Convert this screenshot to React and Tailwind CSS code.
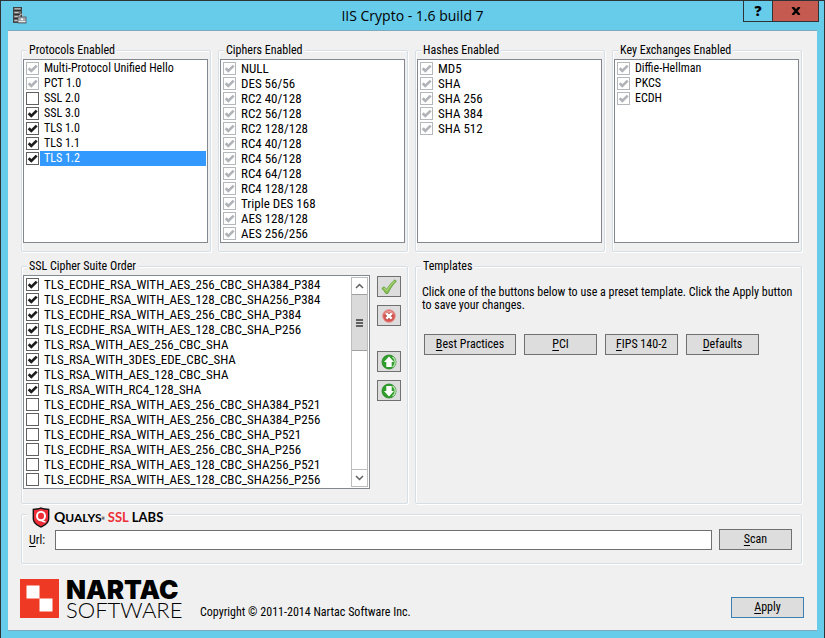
import React from "react";

const protocols = [
  { name: "Multi-Protocol Unified Hello", state: "locked" },
  { name: "PCT 1.0", state: "locked" },
  { name: "SSL 2.0", state: "off" },
  { name: "SSL 3.0", state: "on" },
  { name: "TLS 1.0", state: "on" },
  { name: "TLS 1.1", state: "on" },
  { name: "TLS 1.2", state: "on", selected: true },
];

const locked = (names) => names.map((name) => ({ name, state: "locked" }));

const ciphers = locked([
  "NULL",
  "DES 56/56",
  "RC2 40/128",
  "RC2 56/128",
  "RC2 128/128",
  "RC4 40/128",
  "RC4 56/128",
  "RC4 64/128",
  "RC4 128/128",
  "Triple DES 168",
  "AES 128/128",
  "AES 256/256",
]);
const hashes = locked(["MD5", "SHA", "SHA 256", "SHA 384", "SHA 512"]);
const exchanges = locked(["Diffie-Hellman", "PKCS", "ECDH"]);

const suites = [
  ["TLS_ECDHE_RSA_WITH_AES_256_CBC_SHA384_P384", "on"],
  ["TLS_ECDHE_RSA_WITH_AES_128_CBC_SHA256_P384", "on"],
  ["TLS_ECDHE_RSA_WITH_AES_256_CBC_SHA_P384", "on"],
  ["TLS_ECDHE_RSA_WITH_AES_128_CBC_SHA_P256", "on"],
  ["TLS_RSA_WITH_AES_256_CBC_SHA", "on"],
  ["TLS_RSA_WITH_3DES_EDE_CBC_SHA", "on"],
  ["TLS_RSA_WITH_AES_128_CBC_SHA", "on"],
  ["TLS_RSA_WITH_RC4_128_SHA", "on"],
  ["TLS_ECDHE_RSA_WITH_AES_256_CBC_SHA384_P521", "off"],
  ["TLS_ECDHE_RSA_WITH_AES_256_CBC_SHA384_P256", "off"],
  ["TLS_ECDHE_RSA_WITH_AES_256_CBC_SHA_P521", "off"],
  ["TLS_ECDHE_RSA_WITH_AES_256_CBC_SHA_P256", "off"],
  ["TLS_ECDHE_RSA_WITH_AES_128_CBC_SHA256_P521", "off"],
  ["TLS_ECDHE_RSA_WITH_AES_128_CBC_SHA256_P256", "off"],
].map(([name, state]) => ({ name, state }));

function CheckRow({ item }) {
  const isLocked = item.state === "locked";
  return (
    <li>
      <label className="flex h-[15px] items-center gap-px pl-px">
        <span className="grid size-[13px] shrink-0">
          <input
            type="checkbox"
            defaultChecked={item.state !== "off"}
            disabled={isLocked}
            className="peer col-start-1 row-start-1 size-[13px] appearance-none border border-[#606060] bg-white disabled:border-[#b4b8bc]"
          />
          <svg
            viewBox="0 0 13 13"
            aria-hidden="true"
            className="pointer-events-none invisible col-start-1 row-start-1 size-[13px] text-[#1c1c1c] peer-checked:visible peer-disabled:text-[#b0b4b8]"
          >
            <path d="M2.700 6.200L5.300 8.900L10.700 3.600" fill="none" stroke="currentColor" strokeWidth="2.700" />
          </svg>
        </span>
        <span
          className={
            item.selected
              ? "h-[15px] flex-1 bg-[#3399ff] pl-1 leading-[15px] whitespace-nowrap text-white"
              : "h-[15px] flex-1 pl-1 leading-[15px] whitespace-nowrap"
          }
        >
          {item.name}
        </span>
      </label>
    </li>
  );
}

function Group({ title, className, children }) {
  return (
    <fieldset className="flex min-w-0 flex-col rounded-[2px] border border-[#d5dfe5] shadow-[1px_1px_0_#fff,inset_1px_1px_0_#fff]">
      <legend className="ml-[5px] bg-[#f0f0f0] px-[2px] leading-[13px]">{title}</legend>
      <div className={"flex-1 " + className}>{children}</div>
    </fieldset>
  );
}

function ListGroup({ title, items, textSize = "text-[12px]" }) {
  return (
    <Group title={title} className="flex flex-col pt-[2px] pr-[2px] pb-2 pl-px">
      <ul className={"flex-1 border border-[#828790] bg-white p-px " + textSize}>
        {items.map((item) => (
          <CheckRow key={item.name} item={item} />
        ))}
      </ul>
    </Group>
  );
}

function PushButton({ hot, rest, accent, wide }) {
  return (
    <button
      type="button"
      className={
        "h-[21px] shrink-0 border bg-[#dddddd] text-center leading-[19px] " +
        (wide ? "w-[92px] " : "w-[73px] ") +
        (accent ? "border-[#3c7fb1]" : "border-[#707070]")
      }
    >
      <span className="underline underline-offset-2">{hot}</span>
      {rest}
    </button>
  );
}

function ToolButton({ label, children }) {
  return (
    <button
      type="button"
      aria-label={label}
      className="flex h-[21px] w-6 items-center justify-center border border-[#707070] bg-[#dddddd]"
    >
      <svg viewBox="0 0 16 16" className="size-4">
        {children}
      </svg>
    </button>
  );
}

function ScrollBar() {
  return (
    <div className="flex w-[17px] shrink-0 flex-col border-x border-[#bcbcbc] bg-white">
      <button
        type="button"
        aria-label="Scroll up"
        className="flex h-[17px] items-center justify-center border-t border-[#bcbcbc]"
      >
        <svg viewBox="0 0 9 6" className="h-[6px] w-[9px]">
          <path d="M1 5L4.5 1.5L8 5" fill="none" stroke="#606060" strokeWidth="1.5" />
        </svg>
      </button>
      <div className="flex h-[57px] flex-col items-center justify-center gap-px border-y border-[#a0a0a0] bg-[#dadada]">
        <span className="h-[2px] w-[7px] bg-[#606060]" />
        <span className="h-[2px] w-[7px] bg-[#606060]" />
        <span className="h-[2px] w-[7px] bg-[#606060]" />
      </div>
      <div className="flex-1" />
      <button
        type="button"
        aria-label="Scroll down"
        className="flex h-[18px] items-center justify-center border-y border-[#bcbcbc]"
      >
        <svg viewBox="0 0 9 6" className="h-[6px] w-[9px]">
          <path d="M1 1L4.5 4.5L8 1" fill="none" stroke="#606060" strokeWidth="1.5" />
        </svg>
      </button>
    </div>
  );
}

function ServerIcon() {
  return (
    <svg viewBox="0 0 14 17" className="h-[17px] w-[14px]" aria-hidden="true">
      <rect x="0.5" y="0.5" width="8" height="15" fill="#6b6b6b" stroke="#3f4346" />
      <path d="M1 3.5h7M1 7.5h7M1 11.5h7" stroke="#2c2c2c" />
      <path d="M1.5 1.8h6M1.5 5.5h4M1.5 9.5h4M1.5 13.5h4" stroke="#c4c4c4" />
      <path d="M6.500 10V9.200a2 2 0 0 1 4 0V10" fill="none" stroke="#b5bcc2" />
      <rect x="5" y="10" width="8" height="6" fill="#a4aab0" stroke="#50565a" strokeWidth="0.8" />
      <path d="M5.500 14.500h7" stroke="#e6e8ea" />
      <rect x="8" y="11.500" width="2" height="1.500" fill="#fff" />
    </svg>
  );
}

function QualysLogo() {
  return (
    <span className="flex h-[21px] items-start pt-[3px] pl-[3px]">
      <svg viewBox="0 0 18 21" className="h-[21px] w-[18px] shrink-0" aria-hidden="true">
        <path
          d="M9 0.3C11.5 1.3 14.5 1.7 17.4 1.7V11.5C17.4 16 13.5 18.8 9 20.7C4.500 18.8 0.600 16 0.600 11.500V1.7C3.5 1.7 6.500 1.300 9 0.300Z"
          fill="#1a1416"
        />
        <path
          d="M9 1.700C11.300 2.500 13.700 2.900 16 3V11.500C16 15 13 17.400 9 19.200C5 17.400 2 15 2 11.500V3C4.300 2.900 6.700 2.500 9 1.700Z"
          fill="#ed2e38"
        />
        <ellipse cx="9" cy="9" rx="4" ry="4.300" fill="none" stroke="#fff" strokeWidth="2" />
        <path d="M8.500 13.200C10 13.200 11 15.200 13.500 14.800" fill="none" stroke="#fff" strokeWidth="1.500" />
      </svg>
      <span className="flex items-baseline gap-[3px] pl-1 font-['Lato',sans-serif] text-[13px] leading-[19px] font-bold text-black">
        <span className="text-[14px]">
          Q<span className="text-[12px]">UALYS</span>
          <sup className="text-[4px]">®</sup>
        </span>
        <span className="text-[#ed2e38]">SSL</span>
        <span>LABS</span>
      </span>
    </span>
  );
}

export default function App() {
  return (
    <div className="flex min-h-screen flex-col border border-[#2f3336] bg-[#67cbea] font-['Roboto_Condensed','Liberation_Sans',sans-serif] text-[12px] text-black">
      <header className="grid h-[29px] grid-cols-[1fr_auto_1fr] items-center">
        <span className="pl-3">
          <ServerIcon />
        </span>
        <h1 className="font-['Open_Sans',sans-serif] text-[14px] leading-[29px]">IIS Crypto - 1.6 build 7</h1>
        <div className="flex justify-end self-start pr-[5px]">
          <button
            type="button"
            aria-label="Help"
            className="flex h-[21px] w-[29px] items-center justify-center border-b border-l border-[#2f3336]"
          >
            <span className="font-['Open_Sans',sans-serif] text-[14px] leading-[20px] font-extrabold">?</span>
          </button>
          <button
            type="button"
            aria-label="Close"
            className="flex h-[21px] w-[47px] items-center justify-center border-x border-b border-[#2f3336] bg-[#c45a50]"
          >
            <svg viewBox="0 0 10 8" className="h-2 w-[10px]">
              <path d="M1.500 0L8.500 8M8.500 0L1.500 8" stroke="#000" strokeWidth="2.400" />
            </svg>
          </button>
        </div>
      </header>

      <main className="mx-[7px] mb-[7px] flex-1 border-y border-[#7fa9bf] bg-[#f0f0f0] pt-[13px]">
        <div className="pr-[15px] pl-[13px]">
          <div className="grid grid-cols-4 gap-[7px]">
            <ListGroup title="Protocols Enabled" items={protocols} />
            <ListGroup title="Ciphers Enabled" items={ciphers} textSize="text-[13px]" />
            <ListGroup title="Hashes Enabled" items={hashes} textSize="text-[13px]" />
            <ListGroup title="Key Exchanges Enabled" items={exchanges} />
          </div>

          <div className="mt-2 grid grid-cols-2 gap-[7px]">
            <Group title="SSL Cipher Suite Order" className="flex gap-[7px] pt-[2px] pr-[6px] pb-[14px] pl-px">
              <div className="flex min-w-0 flex-1 border border-[#828790] bg-white p-px">
                <ul className="min-w-0 flex-1 overflow-hidden text-[13px]">
                  {suites.map((item) => (
                    <CheckRow key={item.name} item={item} />
                  ))}
                </ul>
                <ScrollBar />
              </div>
              <div className="flex flex-col gap-[25px] pt-px">
                <div className="flex flex-col gap-2">
                  <ToolButton label="Check all">
                    <path
                      d="M0.800 9.500L3 7.800L5.800 10.300C8 6.500 10.500 3.500 14 0.800L15.300 2.200C11.500 6 9 9.800 6.800 14.500H4.800C3.800 12.500 2.500 10.800 0.800 9.500Z"
                      fill="#8cc152"
                      stroke="#5c9a38"
                      strokeWidth="0.800"
                    />
                    <path d="M3 9L5.800 11.600C8.200 7.500 10.500 4.800 13.500 2.200" fill="none" stroke="#b9dd8c" strokeWidth="0.900" />
                  </ToolButton>
                  <ToolButton label="Uncheck all">
                    <circle cx="8" cy="8" r="6.300" fill="#d9534f" stroke="#e59a98" strokeWidth="1" />
                    <path d="M3 6.500A5.200 5.200 0 0 1 13 6.500C10 5 6 5 3 6.500Z" fill="#ec9a97" />
                    <path d="M5.300 5.300L10.700 10.700M10.700 5.300L5.300 10.700" stroke="#a94442" strokeWidth="3.800" />
                    <path d="M5.300 5.300L10.700 10.700M10.700 5.300L5.300 10.700" stroke="#fff" strokeWidth="2.600" />
                  </ToolButton>
                </div>
                <div className="flex flex-col gap-2">
                  <ToolButton label="Move up">
                    <circle cx="8" cy="8" r="7" fill="#2f9e2b" stroke="#1f8420" strokeWidth="0.800" />
                    <path d="M11.500 3A6 6 0 0 1 11.500 13" fill="none" stroke="#b5e0ae" strokeWidth="1.400" />
                    <path d="M8 2.500L13 8H10.700V13H5.300V8H3Z" fill="#fff" />
                  </ToolButton>
                  <ToolButton label="Move down">
                    <circle cx="8" cy="8" r="7" fill="#2f9e2b" stroke="#1f8420" strokeWidth="0.800" />
                    <path d="M11.500 3A6 6 0 0 1 11.500 13" fill="none" stroke="#b5e0ae" strokeWidth="1.400" />
                    <path d="M8 13.500L13 8H10.700V3H5.300V8H3Z" fill="#fff" />
                  </ToolButton>
                </div>
              </div>
            </Group>

            <Group title="Templates" className="px-[6px] pt-[13px]">
              <p className="leading-[13px]">
                Click one of the buttons below to use a preset template. Click the Apply button to save your changes.
              </p>
              <div className="mt-[22px] flex flex-wrap gap-2 pl-[2px]">
                <PushButton hot="B" rest="est Practices" wide />
                <PushButton hot="P" rest="CI" />
                <PushButton hot="F" rest="IPS 140-2" />
                <PushButton hot="D" rest="efaults" />
              </div>
            </Group>
          </div>

          <Group title={<QualysLogo />} className="pt-1 pr-[9px] pb-[13px] pl-[7px]">
            <div className="flex items-center">
              <label htmlFor="url" className="w-[26px] shrink-0">
                <span className="underline underline-offset-2">U</span>rl:
              </label>
              <input
                id="url"
                type="text"
                className="mr-[7px] h-5 min-w-0 flex-1 border border-[#707070] bg-white px-1 outline-none"
              />
              <PushButton hot="S" rest="can" />
            </div>
          </Group>
        </div>

        <footer className="mt-[15px] flex items-end pr-[13px] pb-3 pl-3">
          <svg viewBox="0 0 39 39" className="size-[39px] shrink-0" aria-hidden="true">
            <path d="M0 0H39V39H0Z" fill="#ee3a24" />
            <path d="M6.500 6.500H19.500V19.500H6.500ZM19.500 19.500H32.500V32.500H19.500Z" fill="#fff" />
          </svg>
          <div className="h-[39px] w-[133px] pl-[7px]">
            <div className="font-['Inter',sans-serif] text-[26px] leading-[21px] font-black">NARTAC</div>
            <div className="font-['Lato',sans-serif] text-[22px] leading-5 font-light">SOFTWARE</div>
          </div>
          <p className="flex-1 pl-2 leading-[11px]">Copyright © 2011-2014 Nartac Software Inc.</p>
          <PushButton hot="A" rest="pply" accent />
        </footer>
      </main>
    </div>
  );
}
